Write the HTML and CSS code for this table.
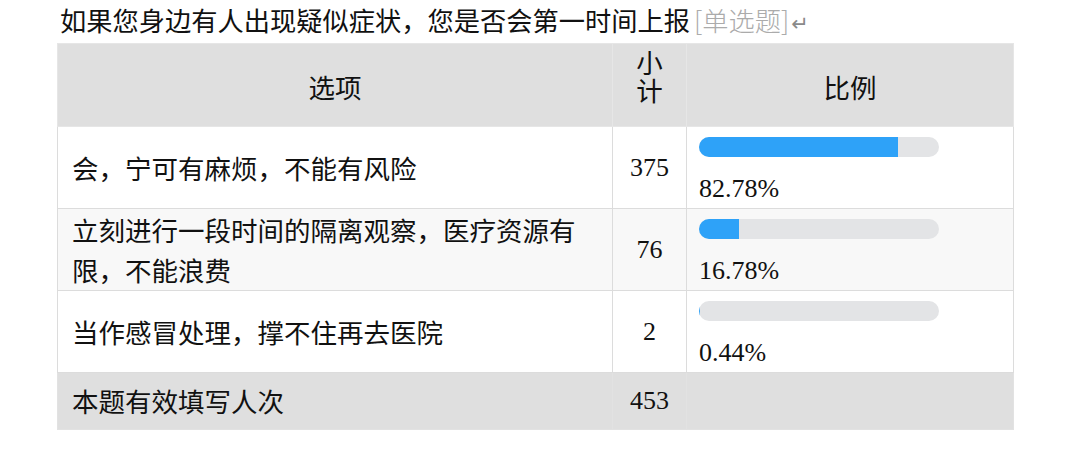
FILE: index.html
```html
<!DOCTYPE html>
<html lang="zh-CN">
<head>
<meta charset="utf-8">
<link rel="stylesheet" href="styles.css">
</head>
<body>
<div class="page">
  <h1 class="title">如果您身边有人出现疑似症状，您是否会第一时间上报<span class="type">[单选题]</span><span class="ret">↵</span></h1>
  <table class="stats">
    <colgroup>
      <col class="c-opt">
      <col class="c-num">
      <col class="c-ratio">
    </colgroup>
    <thead>
      <tr>
        <th class="h-opt">选项</th>
        <th class="h-num">小计</th>
        <th class="h-ratio">比例</th>
      </tr>
    </thead>
    <tbody>
      <tr>
        <td class="opt">会，宁可有麻烦，不能有风险</td>
        <td class="num">375</td>
        <td class="ratio"><div class="bar"><div class="fill" style="width:82.78%"></div></div><div class="pct">82.78%</div></td>
      </tr>
      <tr class="alt">
        <td class="opt">立刻进行一段时间的隔离观察，医疗资源有限，不能浪费</td>
        <td class="num">76</td>
        <td class="ratio"><div class="bar"><div class="fill" style="width:16.78%"></div></div><div class="pct">16.78%</div></td>
      </tr>
      <tr>
        <td class="opt">当作感冒处理，撑不住再去医院</td>
        <td class="num">2</td>
        <td class="ratio"><div class="bar"><div class="fill" style="width:0.44%"></div></div><div class="pct">0.44%</div></td>
      </tr>
    </tbody>
    <tfoot>
      <tr>
        <td class="opt">本题有效填写人次</td>
        <td class="num">453</td>
        <td class="ratio empty"></td>
      </tr>
    </tfoot>
  </table>
</div>
</body>
</html>
```
FILE: styles.css
```css
html, body {
  margin: 0;
  padding: 0;
  background: #ffffff;
}

.page {
  padding: 0 0 0 57px;
  width: 956px;
  color: #111111;
  font-family: "Noto Sans CJK SC", "Noto Sans", sans-serif;
}

.title {
  margin: 0 0 3px 0;
  padding-left: 3px;
  height: 40px;
  font-size: 26.25px;
  font-weight: normal;
  line-height: 40px;
  white-space: nowrap;
  color: #111111;
  overflow: hidden;
}

.title .type {
  color: #ababab;
  font-weight: 300;
  margin-left: 4px;
  line-height: 1;
}

.title .ret {
  color: #8a8a8a;
  font-size: 21px;
  font-family: "DejaVu Sans", sans-serif;
  margin-left: 2px;
  line-height: 1;
}

.stats {
  width: 956px;
  border-collapse: collapse;
  table-layout: fixed;
  font-size: 26.5px;
  border: 1px solid #e4e4e4;
}

.c-opt { width: 555px; }
.c-num { width: 74px; }
.c-ratio { width: 327px; }

.stats th,
.stats td {
  border: 1px solid #dcdcdc;
  padding: 0 13px;
}

.stats thead tr {
  height: 83px;
}

.stats thead th {
  background: #dfdfdf;
  font-weight: normal;
  line-height: 28px;
  text-align: center;
  vertical-align: middle;
  border-color: #e6e6e6;
  padding-top: 4px;
}

.stats thead th.h-num {
  padding: 0 20px 18px;
}

.stats td.opt {
  line-height: 1.48;
  vertical-align: middle;
  padding: 0 13px 0 14px;
}

.stats td.num {
  font-family: "Liberation Serif", "Times New Roman", serif;
  font-size: 26px;
  text-align: center;
  vertical-align: middle;
  padding: 0;
}

.stats td.ratio {
  vertical-align: top;
  padding: 10px 12px 0 12px;
}

.stats tbody tr {
  height: 81px;
}

.stats tbody tr.alt td {
  background: #f8f8f8;
}

.bar {
  width: 240px;
  height: 20px;
  border-radius: 10px;
  background: #e3e4e6;
  overflow: hidden;
  margin-bottom: 12px;
}

.fill {
  height: 100%;
  background: #2ea2f8;
}

.pct {
  font-family: "Liberation Serif", "Times New Roman", serif;
  font-size: 26px;
  line-height: 39px;
}

.stats tfoot tr {
  height: 57px;
}

.stats tfoot td {
  background: #dfdfdf;
  border-color: #e2e2e2;
}
```
